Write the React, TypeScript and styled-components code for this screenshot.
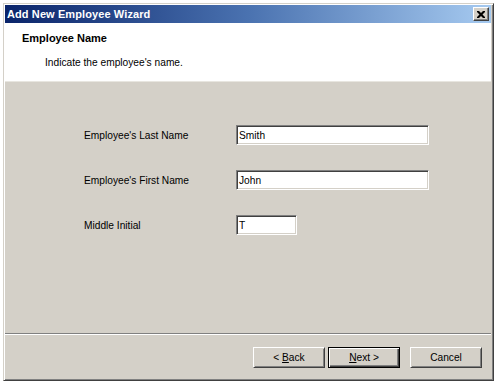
import React from "react";
import styled, { createGlobalStyle } from "styled-components";

const Global = createGlobalStyle`
  html, body { margin: 0; padding: 0; background: #ffffff; }
  body { font-family: "Liberation Sans", Arial, sans-serif; font-size: 10.2px; color: #000; }
`;

const Window = styled.div`
  box-sizing: border-box;
  margin: 3px 0 0 3px;
  width: 491px;
  height: 378px;
  background: #d4d0c8;
  border-top: 1px solid #d4d0c8;
  border-left: 1px solid #d4d0c8;
  border-right: 1px solid #404040;
  border-bottom: 1px solid #404040;
  box-shadow: inset 1px 1px 0 #ffffff, inset -1px -1px 0 #808080;
  padding: 1px 2px 2px 1px;
  display: flex;
  flex-direction: column;
`;

const TitleBar = styled.div`
  height: 18px;
  flex: none;
  background: linear-gradient(to right, #0a246a 0%, #4a72b0 50%, #a6caf0 100%);
  display: flex;
  align-items: center;
  justify-content: space-between;
  padding: 0 2px 0 2px;
`;

const TitleText = styled.span`
  color: #ffffff;
  font-weight: bold;
  font-size: 11px;
  letter-spacing: 0.1px;
`;

const CloseButton = styled.div`
  box-sizing: border-box;
  width: 16px;
  height: 14px;
  background: #d4d0c8;
  border-top: 1px solid #ffffff;
  border-left: 1px solid #ffffff;
  border-right: 1px solid #404040;
  border-bottom: 1px solid #404040;
  box-shadow: inset -1px -1px 0 #808080;
  display: flex;
  align-items: center;
  justify-content: center;
`;

const Header = styled.div`
  height: 59px;
  flex: none;
  background: #ffffff;
  border-bottom: 1px solid #e8e6e0;
  box-sizing: border-box;
  padding: 8px 0 0 17px;
`;

const HeaderTitle = styled.div`
  font-weight: bold;
  font-size: 11px;
  line-height: 14px;
`;

const HeaderSub = styled.div`
  margin: 11px 0 0 23px;
  line-height: 14px;
`;

const Body = styled.div`
  flex: 1;
  padding: 43px 0 0 79px;
`;

const Form = styled.div`
  display: grid;
  grid-template-columns: 152px auto;
  row-gap: 25px;
  align-items: center;
`;

const Label = styled.label`
  line-height: 14px;
  padding-top: 2px;
`;

const TextBox = styled.div<{ $w: number }>`
  box-sizing: border-box;
  width: ${(p) => p.$w}px;
  height: 20px;
  background: #ffffff;
  border-top: 1px solid #808080;
  border-left: 1px solid #808080;
  border-right: 1px solid #ffffff;
  border-bottom: 1px solid #ffffff;
  box-shadow: inset 1px 1px 0 #404040, inset -1px -1px 0 #d4d0c8;
  padding: 0 2px;
  display: flex;
  align-items: center;
`;

const Separator = styled.div`
  height: 1px;
  flex: none;
  background: #808080;
  border-bottom: 1px solid #ffffff;
`;

const Footer = styled.div`
  height: 43px;
  flex: none;
  display: flex;
  justify-content: flex-end;
  padding: 12px 9px 0 0;
  box-sizing: border-box;
`;

const Button = styled.div<{ $default?: boolean; $gap?: number }>`
  box-sizing: border-box;
  width: 72px;
  height: 21px;
  margin-left: ${(p) => p.$gap ?? 0}px;
  background: #d4d0c8;
  display: flex;
  align-items: center;
  justify-content: center;
  border: 1px solid;
  border-color: ${(p) =>
    p.$default ? "#000000" : "#ffffff #404040 #404040 #ffffff"};
  box-shadow: ${(p) =>
    p.$default
      ? "inset 1px 1px 0 #ffffff, inset -1px -1px 0 #404040, inset -2px -2px 0 #808080"
      : "inset 1px 1px 0 #d4d0c8, inset -1px -1px 0 #808080"};
`;

const Key = styled.span`
  text-decoration: underline;
`;

export default function App() {
  return (
    <>
      <Global />
      <Window>
        <TitleBar>
          <TitleText>Add New Employee Wizard</TitleText>
          <CloseButton>
            <svg width="8" height="7" viewBox="0 0 8 7">
              <path d="M0 0h2l2 2 2-2h2v1l-2.5 2.5L8 6v1H6L4 5 2 7H0V6l2.5-2.5L0 1z" fill="#000" />
            </svg>
          </CloseButton>
        </TitleBar>
        <Header>
          <HeaderTitle>Employee Name</HeaderTitle>
          <HeaderSub>Indicate the employee's name.</HeaderSub>
        </Header>
        <Body>
          <Form>
            <Label>Employee's Last Name</Label>
            <TextBox $w={193}>Smith</TextBox>
            <Label>Employee's First Name</Label>
            <TextBox $w={193}>John</TextBox>
            <Label>Middle Initial</Label>
            <TextBox $w={61}>T</TextBox>
          </Form>
        </Body>
        <Separator />
        <Footer>
          <Button>
            &lt;&nbsp;<Key>B</Key>ack
          </Button>
          <Button $default $gap={3}>
            <Key>N</Key>ext&nbsp;&gt;
          </Button>
          <Button $gap={10}>Cancel</Button>
        </Footer>
      </Window>
    </>
  );
}
